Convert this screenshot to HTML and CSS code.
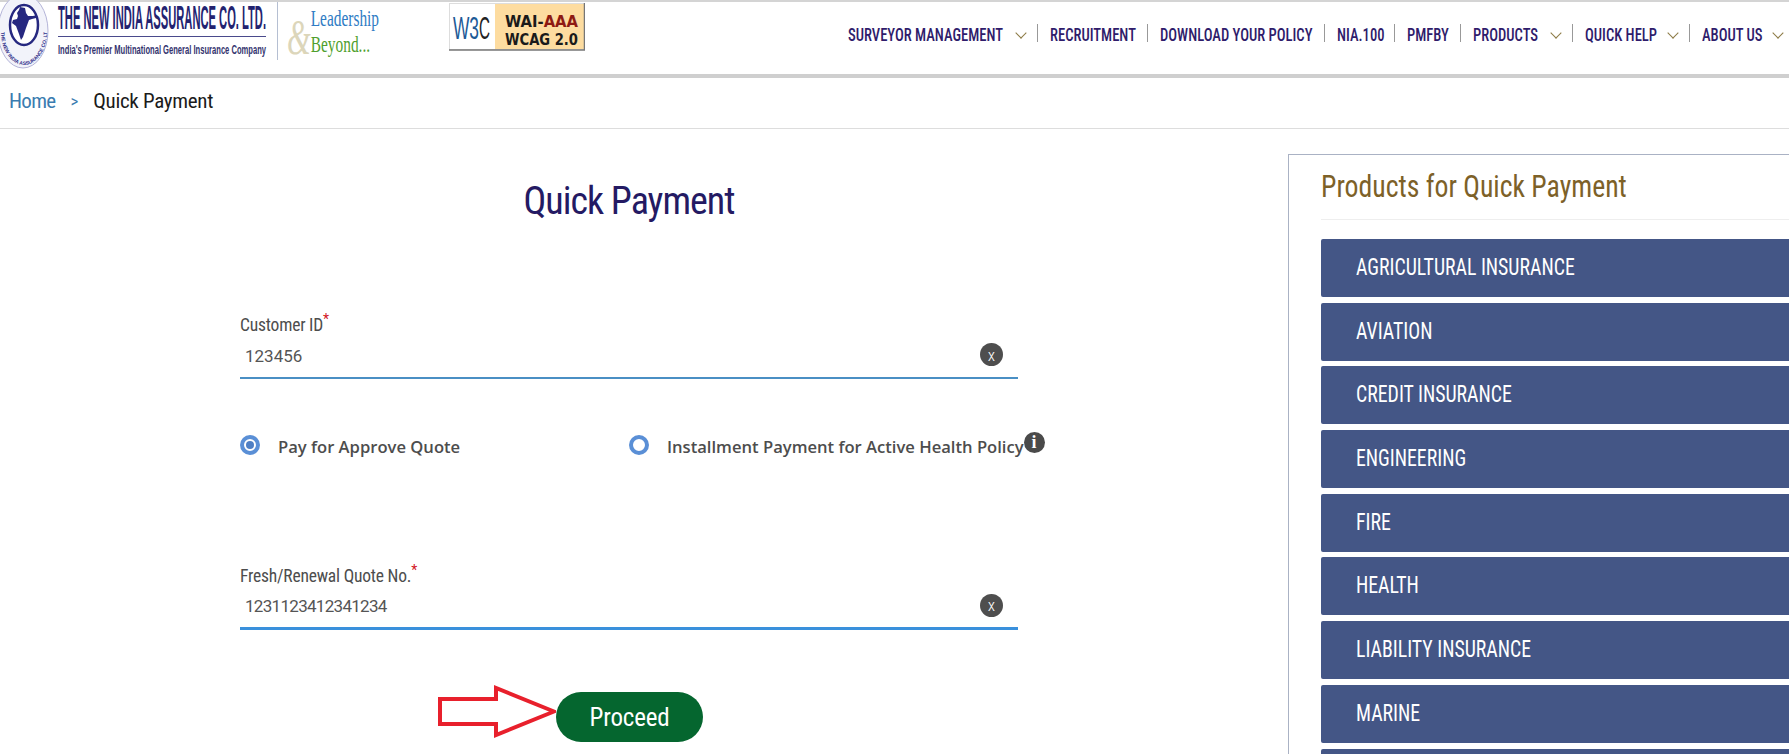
FILE: index.html
```html
<!DOCTYPE html>
<html lang="en">

<head>
    <meta charset="UTF-8">
    <title>Quick Payment</title>
    <link rel="stylesheet" href="styles.css">
</head>

<body>
    <header class="topbar">
        <div class="brand">
            <svg class="seal" width="56" height="72" viewBox="0 0 56 72">
                <ellipse cx="23" cy="31" rx="25" ry="37" fill="#f2f3fa" stroke="#b4b4d8" stroke-width="1"/>
                <ellipse cx="24" cy="25" rx="14" ry="20" fill="#fff" stroke="#262880" stroke-width="2.500"/>
                <path d="M20 7l5 1 1 5 2 3 5 0 4-1-1 3-4 1-3 1-3 8-3 9-2 3-2-6-3-8-4-3 1-3 4-1 1-3-1-3 2-3z" fill="#262880"/>
                <path id="sealRing" d="M1 32A23 33 0 0 0 47 32" fill="none"/>
                <text class="seal-text"><textPath href="#sealRing">THE NEW INDIA ASSURANCE CO. LTD.</textPath></text>
            </svg>
            <svg class="company" width="220" height="62" viewBox="0 0 220 62">
                <text class="company-name" x="1" y="29" textLength="208" lengthAdjust="spacingAndGlyphs">THE NEW INDIA ASSURANCE CO. LTD.</text>
                <rect x="1" y="36" width="208" height="1" fill="#4a4a8c"/>
                <text class="company-tag" x="1" y="54" textLength="208" lengthAdjust="spacingAndGlyphs">India's Premier Multinational General Insurance Company</text>
            </svg>
            <svg class="tagline" width="110" height="58" viewBox="0 0 110 58">
                <text class="tag-amp" x="9" y="52" textLength="24" lengthAdjust="spacingAndGlyphs">&amp;</text>
                <text class="tag-blue" x="33" y="24" textLength="69" lengthAdjust="spacingAndGlyphs">Leadership</text>
                <text class="tag-green" x="33" y="50" textLength="60" lengthAdjust="spacingAndGlyphs">Beyond...</text>
            </svg>
            <svg class="badge" width="136" height="48" viewBox="0 0 136 48">
                <rect x="0.500" y="0.500" width="135" height="46" fill="#fff" stroke="#ddd"/>
                <rect x="46" y="1" width="89" height="45" fill="#fddca0"/>
                <path d="M0 47H136M135.500 0V47" stroke="#777" stroke-width="1.500" fill="none"/>
                <text class="w3c-mark" x="4" y="36" textLength="26" lengthAdjust="spacingAndGlyphs">W3</text>
                <text class="w3c-c" x="30" y="36" textLength="11" lengthAdjust="spacingAndGlyphs">C</text>
                <text class="wai-text" x="56" y="24" textLength="73" lengthAdjust="spacingAndGlyphs">WAI-<tspan class="wai-red">AAA</tspan></text>
                <text class="wai-text" x="56" y="42" textLength="73" lengthAdjust="spacingAndGlyphs">WCAG 2.0</text>
            </svg>
        </div>
        <nav class="mainnav">
            <a class="navitem" href="#"><span>SURVEYOR MANAGEMENT</span><i class="caret"></i></a>
            <a class="navitem" href="#"><span>RECRUITMENT</span></a>
            <a class="navitem" href="#"><span>DOWNLOAD YOUR POLICY</span></a>
            <a class="navitem" href="#"><span>NIA.100</span></a>
            <a class="navitem" href="#"><span>PMFBY</span></a>
            <a class="navitem" href="#"><span>PRODUCTS</span><i class="caret"></i></a>
            <a class="navitem" href="#"><span>QUICK HELP</span><i class="caret"></i></a>
            <a class="navitem" href="#"><span>ABOUT US</span><i class="caret"></i></a>
        </nav>
    </header>

    <div class="crumbs">
        <a href="#">Home</a>
        <span class="crumb-sep">&gt;</span>
        <span class="crumb-current">Quick Payment</span>
    </div>

    <main class="page">
        <section class="payform">
            <h1>Quick Payment</h1>

            <div class="field first-field">
                <label>Customer ID<sup>*</sup></label>
                <div class="inputline">
                    <span class="value">123456</span>
                    <span class="clear">x</span>
                </div>
            </div>

            <div class="radios">
                <div class="radio-opt">
                    <span class="radio checked"></span>
                    <span class="radio-label">Pay for Approve Quote</span>
                </div>
                <div class="radio-opt">
                    <span class="radio"></span>
                    <span class="radio-label">Installment Payment for Active Health Policy</span>
                    <span class="info">i</span>
                </div>
            </div>

            <div class="field">
                <label>Fresh/Renewal Quote No.<sup>*</sup></label>
                <div class="inputline active">
                    <span class="value long">1231123412341234</span>
                    <span class="clear">x</span>
                </div>
            </div>

            <div class="actions">
                <svg class="arrow" width="118" height="53" viewBox="0 0 118 53">
                    <path d="M2 14H58V3L116 26.500 58 50V39H2z" fill="#fff" stroke="#e8202c" stroke-width="4"/>
                </svg>
                <button class="proceed">Proceed</button>
            </div>
        </section>

        <aside class="products">
            <h2><span>Products for Quick Payment</span></h2>
            <ul>
                <li><span>AGRICULTURAL INSURANCE</span></li>
                <li><span>AVIATION</span></li>
                <li><span>CREDIT INSURANCE</span></li>
                <li><span>ENGINEERING</span></li>
                <li><span>FIRE</span></li>
                <li><span>HEALTH</span></li>
                <li><span>LIABILITY INSURANCE</span></li>
                <li><span>MARINE</span></li>
                <li><span>MISCELLANEOUS</span></li>
            </ul>
        </aside>
    </main>
</body>

</html>
```

FILE: styles.css
```css
* {
    box-sizing: border-box;
}

html,
body {
    height: 754px;
    overflow: hidden;
}

body {
    margin: 0;
    background: #fff;
    font-family: Roboto, "Liberation Sans", sans-serif;
    font-stretch: 75%;
    color: #444;
}

a {
    text-decoration: none;
}

.topbar {
    display: flex;
    justify-content: space-between;
    height: 78px;
    border-top: 2px solid #d4d4d4;
    border-bottom: 4px solid #cfcfcf;
    background: #fff;
}

.brand {
    display: flex;
    align-items: flex-start;
}

.seal {
    flex: none;
    margin-top: -2px;
    margin-right: 1px;
}

.seal-text {
    font-family: "Liberation Sans", sans-serif;
    font-size: 5px;
    font-weight: bold;
    fill: #30308a;
}

.company {
    flex: none;
    margin-top: -2px;
}

.company-name {
    font-family: "Liberation Sans", sans-serif;
    font-size: 33px;
    font-weight: bold;
    fill: #232370;
}

.company-tag {
    font-family: "Liberation Sans", sans-serif;
    font-size: 13px;
    font-weight: bold;
    fill: #33336e;
}

.tagline {
    flex: none;
    border-left: 1px solid #b5bfd2;
}

.tag-amp {
    font-family: "Liberation Serif", serif;
    font-style: italic;
    font-size: 52px;
    fill: #dcd6ba;
}

.tag-blue,
.tag-green {
    font-family: "Liberation Serif", serif;
    font-size: 24px;
}

.tag-blue {
    fill: #2f7cc4;
}

.tag-green {
    fill: #4f9f2e;
}

.badge {
    flex: none;
    margin-top: 1px;
    margin-left: 62px;
}

.w3c-mark {
    font-family: "Liberation Sans", sans-serif;
    font-size: 31px;
    fill: #1d5a96;
}

.w3c-c {
    font-family: "Liberation Sans", sans-serif;
    font-size: 31px;
    fill: #222;
}

.wai-text {
    font-family: "DejaVu Sans", sans-serif;
    font-size: 15px;
    font-weight: bold;
    fill: #1a1a1a;
}

.wai-red {
    fill: #8e1a12;
}

.mainnav {
    display: grid;
    grid-template-columns: 201px 110px 177px 70px 66px 112px 117px 100px;
    align-items: start;
    padding-top: 22px;
}

.navitem {
    display: flex;
    align-items: center;
    justify-content: space-between;
    height: 18px;
    padding: 0 12px;
    border-left: 1px solid #999;
    color: #2f1c6b;
    font-size: 18px;
    font-weight: 500;
    line-height: 18px;
    white-space: nowrap;
}

.navitem span {
    display: block;
    width: 0;
    margin-top: 4px;
    transform: scaleX(0.812);
    transform-origin: 0 50%;
}

.navitem:first-child {
    border-left: none;
}

.navitem:last-child {
    padding-right: 7px;
}

.caret {
    display: block;
    flex: none;
    width: 8px;
    height: 8px;
    margin-top: -1px;
    border-right: 1px solid #8c7a45;
    border-bottom: 1px solid #8c7a45;
    transform: rotate(45deg);
}

.crumbs {
    display: flex;
    align-items: center;
    height: 51px;
    padding-bottom: 4px;
    padding-left: 9px;
    border-bottom: 1px solid #ddd;
    font-size: 21px;
}

.crumbs a {
    color: #3a7cb0;
    letter-spacing: -0.700px;
}

.crumb-sep {
    margin: 0 15px;
    color: #3a7cb0;
    font-size: 17px;
}

.crumb-current {
    color: #1b1b1b;
    letter-spacing: -0.300px;
}

.page {
    display: flex;
    align-items: flex-start;
}

.payform {
    flex: none;
    width: 778px;
    margin-left: 240px;
}

.payform h1 {
    margin: 50px 0 0;
    color: #241a63;
    font-size: 38px;
    font-weight: normal;
    letter-spacing: -1px;
    line-height: 44px;
    text-align: center;
}

.field label {
    display: block;
    height: 20px;
    color: #4d4d4d;
    font-size: 17.500px;
    letter-spacing: -0.200px;
    line-height: 20px;
}

.field sup {
    color: #d2141e;
    font-size: 14px;
    line-height: 0;
}

.first-field {
    margin-top: 92px;
}

.inputline {
    display: flex;
    align-items: center;
    justify-content: space-between;
    height: 44px;
    padding: 0 15px 3px 5px;
    border-bottom: 2px solid #4a8fc4;
}

.inputline.active {
    border-bottom: 3px solid #3a90dc;
}

.value {
    margin-top: 2px;
    color: #555;
    font-size: 17px;
    font-stretch: 100%;
}

.value.long {
    letter-spacing: -0.700px;
}

.clear {
    display: flex;
    align-items: center;
    justify-content: center;
    width: 23px;
    height: 23px;
    border-radius: 50%;
    background: #4e4e4e;
    color: #fff;
    font-size: 17px;
    font-weight: 300;
}

.radios {
    display: flex;
    margin-top: 55px;
}

.radio-opt {
    display: flex;
    flex: none;
    align-items: center;
    width: 389px;
    height: 22px;
}

.radio {
    flex: none;
    position: relative;
    width: 20px;
    height: 20px;
    border: 4px solid #5a8fd6;
    border-radius: 50%;
}

.radio.checked::after {
    content: "";
    position: absolute;
    top: 2px;
    left: 2px;
    width: 8px;
    height: 8px;
    border-radius: 50%;
    background: #4f7fc4;
}

.radio-label {
    margin-top: 3px;
    margin-left: 18px;
    color: #4d4d4d;
    font-family: "Open Sans", sans-serif;
    font-size: 16.600px;
    font-stretch: 100%;
    font-weight: 600;
    white-space: nowrap;
}

.info {
    display: flex;
    flex: none;
    align-items: center;
    justify-content: center;
    width: 21px;
    height: 21px;
    margin-top: -5px;
    border-radius: 50%;
    background: #4a4a4a;
    color: #fff;
    font-family: "Liberation Serif", serif;
    font-size: 18px;
    font-weight: bold;
}

.radios + .field {
    margin-top: 110px;
}

.actions {
    display: flex;
    align-items: center;
    margin-top: 55px;
    margin-left: 198px;
}

.arrow {
    flex: none;
    margin-bottom: 11px;
}

.proceed {
    flex: none;
    width: 147px;
    height: 50px;
    border: none;
    border-radius: 25px;
    background: #05662f;
    color: #fff;
    font-family: inherit;
    font-stretch: inherit;
    font-size: 25px;
    letter-spacing: -0.200px;
}

.products {
    flex: none;
    width: 501px;
    height: 620px;
    margin-top: 25px;
    margin-left: 270px;
    padding-left: 32px;
    border-top: 1px solid #aab2c4;
    border-left: 1px solid #aab2c4;
}

.products h2 {
    height: 65px;
    margin: 0;
    padding-top: 11px;
    border-bottom: 1px solid #eee;
    color: #7d6128;
    font-size: 32px;
    font-weight: normal;
    line-height: 40px;
    white-space: nowrap;
}

.products h2 span {
    display: inline-block;
    transform: scaleX(0.867);
    transform-origin: 0 50%;
}

.products ul {
    margin: 19px 0 0;
    padding: 0;
    list-style: none;
}

.products li {
    height: 58px;
    margin-bottom: 5.700px;
    padding-left: 35px;
    border-radius: 2px 0 0 2px;
    background: #445686;
    color: #fff;
    font-size: 24px;
    line-height: 56px;
}

.products li span {
    display: inline-block;
    transform: scaleX(0.825);
    transform-origin: 0 50%;
}
```
